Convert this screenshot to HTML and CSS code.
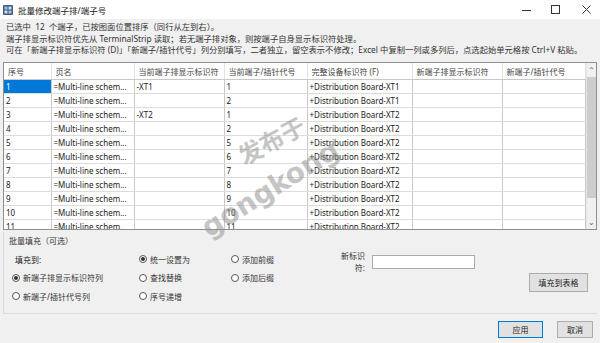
FILE: index.html
```html
<!DOCTYPE html>
<html lang="zh-CN">
<head>
    <meta charset="UTF-8">
    <title>批量修改端子排/端子号</title>
    <link rel="stylesheet" href="styles.css">
</head>
<body>
<div class="window">
    <div class="titlebar">
        <svg class="app-icon" width="10" height="10" viewBox="0 0 10 10">
            <rect x="0" y="0" width="10" height="10" rx="1" fill="#3d5a80"/>
            <rect x="1.5" y="1.5" width="3" height="3" fill="#9fc3e8"/>
            <rect x="5.5" y="1.5" width="3" height="3" fill="#c9dff2"/>
            <rect x="1.5" y="5.5" width="3" height="3" fill="#c9dff2"/>
            <rect x="5.5" y="5.5" width="3" height="3" fill="#9fc3e8"/>
        </svg>
        <span class="title">批量修改端子排/端子号</span>
        <div class="controls">
            <svg width="30" height="20" viewBox="0 0 30 20"><line x1="12" y1="10.5" x2="21" y2="10.5" stroke="#333" stroke-width="1"/></svg>
            <svg width="30" height="20" viewBox="0 0 30 20"><rect x="11.5" y="5.5" width="8" height="8" fill="none" stroke="#333" stroke-width="1"/></svg>
            <svg width="30" height="20" viewBox="0 0 30 20"><path d="M12.5 5.5 L20.5 13.5 M20.5 5.5 L12.5 13.5" stroke="#333" stroke-width="1"/></svg>
        </div>
    </div>

    <div class="content">
        <div class="info">
            <p>已选中&nbsp; 12&nbsp; 个端子，已按图面位置排序（同行从左到右）。</p>
            <p>端子排显示标识符优先从 TerminalStrip 读取；若无端子排对象，则按端子自身显示标识符处理。</p>
            <p>可在「新端子排显示标识符 (D)」「新端子/插针代号」列分别填写，二者独立，留空表示不修改；Excel 中复制一列或多列后，点选起始单元格按 Ctrl+V 粘贴。</p>
        </div>

        <div class="grid">
            <table>
                <colgroup>
                    <col style="width:47px"><col style="width:83px"><col style="width:90px"><col style="width:83px">
                    <col style="width:105px"><col style="width:90px"><col style="width:83px">
                </colgroup>
                <thead>
                    <tr>
                        <th>序号</th><th>页名</th><th>当前端子排显示标识符</th><th>当前端子/插针代号</th>
                        <th>完整设备标识符 (F)</th><th>新端子排显示标识符</th><th>新端子/插针代号</th>
                    </tr>
                </thead>
                <tbody id="rows"></tbody>
            </table>
            <div class="vscroll">
                <span class="arrow">&#8963;</span>
                <span class="thumb"></span>
                <span class="track"></span>
                <span class="arrow">&#8964;</span>
            </div>
        </div>

        <div class="watermark">
            <span class="wm-cn">发布于</span>
            <span class="wm-en">gongkong</span>
        </div>

        <div class="fill">
            <div class="fill-title">批量填充（可选）</div>
            <div class="fill-body">
                <div class="options">
                    <span class="label">填充到:</span>
                    <span class="opt"><i class="radio on"></i>统一设置为</span>
                    <span class="opt"><i class="radio"></i>添加前缀</span>
                    <span class="opt"><i class="radio on"></i>新端子排显示标识符列</span>
                    <span class="opt"><i class="radio"></i>查找替换</span>
                    <span class="opt"><i class="radio"></i>添加后缀</span>
                    <span class="opt"><i class="radio"></i>新端子/插针代号列</span>
                    <span class="opt"><i class="radio"></i>序号递增</span>
                </div>
                <div class="ident">
                    <div class="ident-row">
                        <span class="ident-label">新标识<br>符:</span>
                        <span class="input"></span>
                    </div>
                    <button class="btn fill-btn">填充到表格</button>
                </div>
            </div>
        </div>

        <div class="footer">
            <button class="btn default">应用</button>
            <button class="btn">取消</button>
        </div>
    </div>
</div>

<script>
    const data = [
        ['1', '-XT1', '1', 'XT1'],
        ['2', '', '2', 'XT1'],
        ['3', '-XT2', '1', 'XT2'],
        ['4', '', '2', 'XT2'],
        ['5', '', '5', 'XT2'],
        ['6', '', '6', 'XT2'],
        ['7', '', '7', 'XT2'],
        ['8', '', '8', 'XT2'],
        ['9', '', '9', 'XT2'],
        ['10', '', '10', 'XT2'],
        ['11', '', '11', 'XT2']
    ];
    const tbody = document.getElementById('rows');
    data.forEach((row, i) => {
        const tr = document.createElement('tr');
        const cells = [row[0], '=Multi-line schem...', row[1], row[2], '+Distribution Board-' + row[3], '', ''];
        cells.forEach((text, j) => {
            const td = document.createElement('td');
            td.textContent = text;
            if (i === 0 && j === 0) td.className = 'selected';
            tr.appendChild(td);
        });
        tbody.appendChild(tr);
    });
</script>
</body>
</html>
```

FILE: styles.css
```css
body {
    margin: 0;
    padding: 0;
    font-family: "Noto Sans", "Noto Sans CJK SC", sans-serif;
    font-size: 8px;
    color: #222;
    background-color: #f0f0f0;
}
p {
    margin: 0;
}
.window {
    width: 600px;
    height: 343px;
    overflow: hidden;
    display: flex;
    flex-direction: column;
}
.titlebar {
    height: 19px;
    background-color: #fff;
    display: flex;
    align-items: center;
    padding-left: 3px;
    flex-shrink: 0;
}
.app-icon {
    margin-right: 5px;
}
.title {
    font-size: 8.5px;
    color: #222;
}
.controls {
    margin-left: auto;
    display: flex;
}
.content {
    position: relative;
    flex: 1;
    display: flex;
    flex-direction: column;
    padding: 0 3px;
}
.info {
    padding: 2px 3px 0;
    font-size: 8.3px;
    line-height: 11.5px;
    color: #333;
    height: 41px;
}

/* data grid */
.grid {
    height: 166px;
    border: 1px solid #8e8f8f;
    background-color: #fff;
    display: flex;
    overflow: hidden;
}
table {
    table-layout: fixed;
    border-collapse: collapse;
    width: 581px;
}
th {
    height: 16px;
    font-weight: normal;
    text-align: left;
    padding: 0 0 0 4px;
    color: #444;
    border-right: 1px solid #e2e2e2;
    border-bottom: 1px solid #c8c8c8;
    white-space: nowrap;
    overflow: hidden;
}
td {
    height: 13px;
    padding: 0 0 0 2px;
    border-right: 1px solid #c9c9c9;
    border-bottom: 1px solid #dcdcdc;
    white-space: nowrap;
    overflow: hidden;
    color: #222;
}
td.selected {
    background-color: #0078d7;
    color: #fff;
}
.vscroll {
    width: 11px;
    display: flex;
    flex-direction: column;
    align-items: center;
    background-color: #f0f0f0;
    border-left: 1px solid #e6e6e6;
}
.vscroll .arrow {
    height: 14px;
    line-height: 14px;
    font-size: 8px;
    color: #606060;
}
.vscroll .thumb {
    width: 9px;
    height: 121px;
    background-color: #cdcdcd;
}
.vscroll .track {
    flex: 1;
}

/* watermark over the grid */
.watermark {
    position: absolute;
    left: 190px;
    top: 95px;
    width: 170px;
    height: 140px;
    pointer-events: none;
    color: rgba(140, 140, 140, 0.5);
    font-weight: bold;
}
.wm-cn {
    position: absolute;
    left: 45px;
    top: 8px;
    font-size: 24px;
    transform: rotate(-28deg);
}
.wm-en {
    position: absolute;
    left: 2px;
    top: 58px;
    font-size: 28px;
    font-family: "DejaVu Sans", sans-serif;
    transform: rotate(-32deg);
}

/* fill group */
.fill {
    height: 78px;
    margin-top: 2px;
    border-left: 1px solid #d8d8d8;
    border-bottom: 1px solid #dcdcdc;
    padding: 3px 9px 0 5px;
}
.fill-title {
    line-height: 12px;
    color: #333;
}
.fill-body {
    display: flex;
    padding-left: 3px;
    margin-top: 3px;
}
.options {
    display: grid;
    grid-template-columns: 127px 92px 70px;
    grid-auto-rows: 18.5px;
    align-items: center;
}
.label {
    padding-left: 3px;
}
.opt {
    display: flex;
    align-items: center;
    color: #333;
}
.radio {
    width: 8px;
    height: 8px;
    border: 1px solid #555;
    border-radius: 50%;
    background-color: #fff;
    margin-right: 3px;
    display: flex;
    align-items: center;
    justify-content: center;
    box-sizing: border-box;
}
.radio.on::after {
    content: "";
    width: 4px;
    height: 4px;
    border-radius: 50%;
    background-color: #333;
}
.ident {
    flex: 1;
    display: flex;
    flex-direction: column;
    margin-left: 36px;
}
.ident-row {
    display: flex;
    align-items: center;
    gap: 7px;
    height: 24px;
}
.ident-label {
    width: 28px;
    text-align: right;
    line-height: 12px;
    color: #333;
}
.input {
    width: 103px;
    height: 14px;
    box-sizing: border-box;
    border: 1px solid #a9a9a9;
    background-color: #fff;
}
.btn {
    font-family: inherit;
    font-size: 8px;
    color: #222;
    background-color: #e1e1e1;
    border: 1px solid #adadad;
    padding: 0;
    height: 19px;
}
.fill-btn {
    align-self: flex-end;
    width: 59px;
    margin-top: -1px;
}
.footer {
    display: flex;
    justify-content: flex-end;
    gap: 14px;
    padding: 7px 4px 0 0;
}
.footer .btn {
    width: 36px;
    height: 17px;
}
.footer .btn.default {
    width: 45px;
    border: 1px solid #0078d7;
}
```
